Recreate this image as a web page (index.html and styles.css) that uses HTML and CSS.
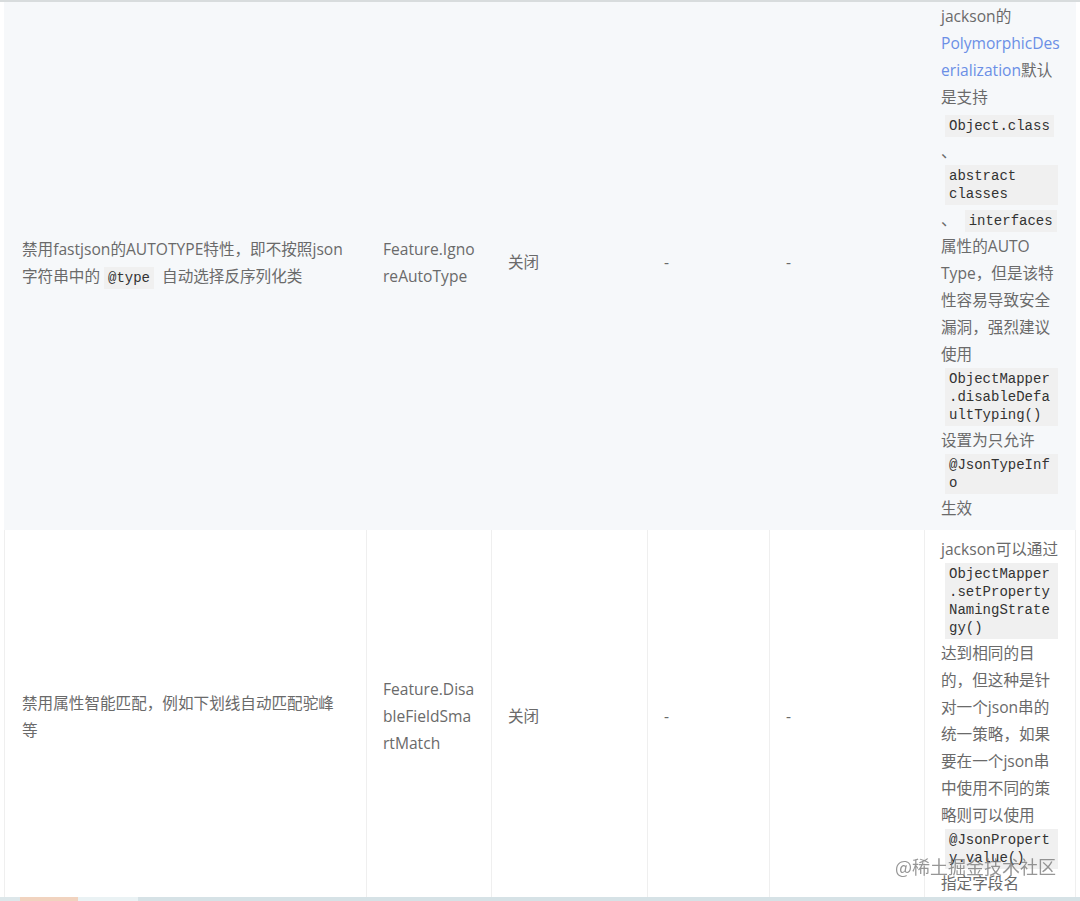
FILE: index.html
```html
<!DOCTYPE html>
<html lang="zh-CN">
<head>
<meta charset="utf-8">
<title>fastjson vs jackson</title>
<link rel="stylesheet" href="styles.css">
</head>
<body>
<div class="topline"></div>
<table class="feat">
  <colgroup>
    <col class="w1"><col class="w2"><col class="w3"><col class="w4"><col class="w5"><col class="w6">
  </colgroup>
  <tbody>
    <tr class="odd">
      <td class="desc">禁用fastjson的AUTOTYPE特性，即不按照json字符串中的<code>@type</code> 自动选择反序列化类</td>
      <td>Feature.IgnoreAutoType</td>
      <td>关闭</td>
      <td>-</td>
      <td>-</td>
      <td class="note">jackson的<a class="link">PolymorphicDeserialization</a>默认是支持 <code>Object.class</code> 、 <code>abstract classes</code> 、 <code>interfaces</code> 属性的AUTO Type，但是该特性容易导致安全漏洞，强烈建议使用 <code>ObjectMapper.disableDefaultTyping()</code> 设置为只允许 <code>@JsonTypeInfo</code> 生效</td>
    </tr>
    <tr class="even">
      <td class="desc">禁用属性智能匹配，例如下划线自动匹配驼峰等</td>
      <td>Feature.DisableFieldSmartMatch</td>
      <td>关闭</td>
      <td>-</td>
      <td>-</td>
      <td class="note">jackson可以通过 <code>ObjectMapper.setPropertyNamingStrategy()</code> 达到相同的目的，但这种是针对一个json串的统一策略，如果要在一个json串中使用不同的策略则可以使用 <code>@JsonProperty.value()</code> 指定字段名</td>
    </tr>
  </tbody>
</table>
<div class="wm">@稀土掘金技术社区</div>
<div class="bottombar"></div>
</body>
</html>
```

FILE: styles.css
```css
html, body {
  margin: 0;
  padding: 0;
  background: #ffffff;
}

body {
  font-family: "Open Sans", "Noto Sans CJK SC", sans-serif;
  overflow: hidden;
}

.topline {
  height: 2px;
  background: #d8dcdd;
}

.feat {
  margin-left: 4px;
  width: 1072px;
  table-layout: fixed;
  border-collapse: separate;
  border-spacing: 0;
  font-size: 15.6px;
  line-height: 27px;
  color: #6a6a6a;
}

.w1 { width: 362px; }
.w2 { width: 125px; }
.w3 { width: 156px; }
.w4 { width: 122px; }
.w5 { width: 155px; }
.w6 { width: 152px; }

.feat td {
  padding: 6px 15px 6px 16px;
  vertical-align: middle;
  overflow-wrap: anywhere;
  border-left: 1px solid #efefef;
}

.feat td:last-child {
  border-right: 1px solid #efefef;
}

.feat td.desc {
  padding-left: 17px;
  padding-right: 20px;
}

.feat td.note {
  padding-right: 13px;
}

.feat tr.odd td {
  background: #f6f8fa;
  border-color: #f6f8fa;
  padding-top: 1px;
  padding-bottom: 8px;
}

.feat tr.even td {
  background: #ffffff;
}

.link {
  color: #6b8fe6;
  text-decoration: none;
}

code {
  display: inline-block;
  font-family: "Liberation Mono", "DejaVu Sans Mono", monospace;
  font-size: 14px;
  line-height: 18px;
  padding: 2px 4px;
  margin: 0 4px;
  background: #f0f0f0;
  color: #333333;
  overflow-wrap: anywhere;
}

.wm {
  position: fixed;
  right: 24px;
  bottom: 26px;
  font-family: "Noto Sans CJK SC", sans-serif;
  font-size: 18px;
  line-height: 18px;
  color: rgba(115, 115, 115, 0.75);
}

.bottombar {
  position: fixed;
  left: 0;
  right: 0;
  bottom: 0;
  height: 4px;
  background: linear-gradient(to right, #dde7ea 0 20px, #f1d3bf 20px 78px, #eaf2f4 78px 138px, #d6e2e6 138px);
}
```
